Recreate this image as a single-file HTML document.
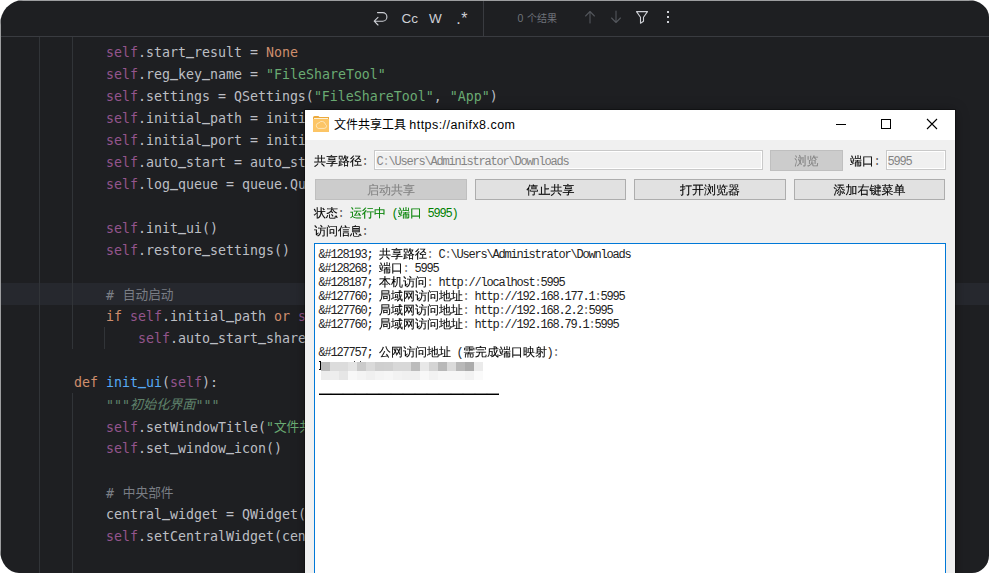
<!DOCTYPE html>
<html lang="zh-CN">
<head>
<meta charset="utf-8">
<title>文件共享工具</title>
<style>
html,body{margin:0;padding:0;background:#fff;}
body{width:989px;height:573px;overflow:hidden;position:relative;font-family:"Liberation Sans","Noto Sans CJK SC",sans-serif;}
#ide{position:absolute;left:0;top:0;width:989px;height:573px;background:#1e1f22;border-radius:23px 21px 17px 19px / 25px 17px 17.5px 23px;overflow:hidden;}
#ide .in{position:absolute;left:0;top:0;width:989px;height:573px;}
.edge{position:absolute;background:#9d9ea0;}
.abs{position:absolute;}
#tb{left:0;top:0;width:989px;height:36px;border-bottom:1px solid #393b40;}
.vg{position:absolute;width:1px;background:#313438;}
#cur{left:0;top:283px;width:989px;height:22px;background:#26282e;}
.cl{position:absolute;left:42px;height:22px;line-height:22px;white-space:pre;font-family:"DejaVu Sans Mono","Liberation Mono","Noto Sans CJK SC",monospace;font-size:13.29px;color:#bcbec4;}
.cl .cj{font-family:"Noto Sans CJK SC",sans-serif;font-size:12.7px;position:relative;top:-1.2px;}
.k{color:#cf8e6d}.s{color:#94558d}.g{color:#6aab73}.f{color:#56a8f5}.c{color:#7a7e85}.d{color:#5f826b;font-style:italic}
/* toolbar */
.ti{position:absolute;color:#ced0d6;font-size:13.5px;line-height:16px;white-space:pre;}
/* dialog */
#win{-webkit-text-stroke:0.12px currentColor;box-shadow:0 0 0 1px rgba(0,0,0,.3),0 1px 12px rgba(0,0,0,.35);position:absolute;left:305px;top:110px;width:650px;height:470px;background:#f0f0f0;box-sizing:border-box;font-size:12px;color:#000;font-family:"WenQuanYi Zen Hei","Noto Sans CJK SC",sans-serif;}
#title{position:absolute;left:0;top:0;width:650px;height:30px;background:#fff;}
#ttxt{-webkit-text-stroke:0;position:absolute;left:29px;top:7px;line-height:16px;font-size:12px;white-space:pre;font-family:"Liberation Sans","Noto Sans CJK SC",sans-serif;}
.m{-webkit-text-stroke:0;font-family:"Liberation Mono",monospace;font-size:12px;letter-spacing:-1.2px;margin-left:-.6px;margin-right:.6px;}
.lb{position:absolute;line-height:14px;height:14px;white-space:pre;font-size:12px;}
.btn{position:absolute;box-sizing:border-box;height:21px;border:1px solid #adadad;background:#e1e1e1;text-align:center;line-height:21px;font-size:12px;white-space:pre;}
.btn.dis{background:#cccccc;border-color:#bfbfbf;color:#838383;}
.inp{position:absolute;box-sizing:border-box;height:20px;border:1px solid #c9c9c9;background:#f0f0f0;box-shadow:inset 0 0 0 1px #fff;color:#848484;line-height:20px;padding-left:2px;white-space:pre;font-size:12px;}
#ta{position:absolute;left:9px;top:133px;width:632px;height:340px;box-sizing:border-box;border:1px solid #0078d7;background:#fff;}
.ll{position:absolute;left:4px;height:14px;line-height:14px;white-space:pre;font-size:12px;}
#mos{position:absolute;left:5.5px;top:118px;width:162px;height:18px;}
#mos i{position:absolute;width:9px;height:9px;display:block;}
#ttxt .u{font-size:12.5px;letter-spacing:0.45px;}
.hr{width:180px;overflow:hidden;background:linear-gradient(#000,#000) no-repeat 0 7px/180px 1px;}
.px{position:absolute;background:#000;}
.us{position:relative;top:-2.5px;font-weight:bold;}
.cl .d .cj{font-size:13.1px;}
.cl .c .cj{margin-left:.8px;}
.co{opacity:.62;}
.ll .m{color:#222;}
</style>
</head>
<body>
<div id="ide"><div class="in">
<div id="tb" class="abs">
<svg class="abs" style="left:0;top:0" width="989" height="36" viewBox="0 0 989 36" fill="none">
 <rect x="483" y="1" width="1" height="35" fill="#393b40"/>
 <path d="M377.5 12.6H382.6A4.3 4.3 0 0 1 382.6 21.2H374.6M378 17.4L374.2 21.2L378 25" stroke="#ced0d6" stroke-width="1.1" stroke-linecap="round" stroke-linejoin="round"/>
 <path d="M590 22.9V11.6M585.6 16L590 11.5L594.4 16" stroke="#52555b" stroke-width="1.1" stroke-linecap="round" stroke-linejoin="round"/>
 <path d="M616 11.1V22.4M611.6 18L616 22.5L620.4 18" stroke="#52555b" stroke-width="1.1" stroke-linecap="round" stroke-linejoin="round"/>
 <path d="M636.5 11.6H647.5L643.5 17.3V21.3L640.5 23.2V17.3Z" stroke="#ced0d6" stroke-width="1.1" stroke-linejoin="round"/>
 <rect x="667" y="11" width="2" height="2" fill="#ced0d6"/><rect x="667" y="16" width="2" height="2" fill="#ced0d6"/><rect x="667" y="21" width="2" height="2" fill="#ced0d6"/>
</svg>
<div class="ti" style="left:401.5px;top:11px">Cc</div>
<div class="ti" style="left:429px;top:11px">W</div>
<div class="ti" style="left:456.3px;top:11.2px;font-size:16px;letter-spacing:.4px">.*</div>
<div class="ti" style="left:517.4px;top:9.5px;font-size:10.5px;color:#6f737a">0 <span style="font-size:10px;margin-left:.8px">个结果</span></div>
</div>
<div id="cur" class="abs"></div>
<div class="vg" style="left:39px;top:37px;height:536px"></div>
<div class="vg" style="left:72px;top:37px;height:312px"></div>
<div class="vg" style="left:104px;top:327px;height:22px"></div>
<div class="vg" style="left:72px;top:393px;height:180px"></div>
<div class="edge" style="left:0;top:0;width:989px;height:1px"></div><div class="edge" style="left:0;top:0;width:1px;height:573px"></div>
<div id="code">
<div class="cl" style="top:42px">        <span class="s">self</span>.start<span class="us">_</span>result = <span class="k">None</span></div>
<div class="cl" style="top:64px">        <span class="s">self</span>.reg<span class="us">_</span>key<span class="us">_</span>name = <span class="g">"FileShareTool"</span></div>
<div class="cl" style="top:86px">        <span class="s">self</span>.settings = QSettings(<span class="g">"FileShareTool"</span>, <span class="g">"App"</span>)</div>
<div class="cl" style="top:108px">        <span class="s">self</span>.initial<span class="us">_</span>path = initial<span class="us">_</span>path</div>
<div class="cl" style="top:130px">        <span class="s">self</span>.initial<span class="us">_</span>port = initial<span class="us">_</span>port</div>
<div class="cl" style="top:152px">        <span class="s">self</span>.auto<span class="us">_</span>start = auto<span class="us">_</span>start</div>
<div class="cl" style="top:174px">        <span class="s">self</span>.log<span class="us">_</span>queue = queue.Queue()</div>
<div class="cl" style="top:218px">        <span class="s">self</span>.init<span class="us">_</span>ui()</div>
<div class="cl" style="top:240px">        <span class="s">self</span>.restore<span class="us">_</span>settings()</div>
<div class="cl" style="top:284px">        <span class="c"># <span class="cj">自动启动</span></span></div>
<div class="cl" style="top:306px">        <span class="k">if</span> <span class="s">self</span>.initial<span class="us">_</span>path <span class="k">or</span> <span class="s">self</span>.initial<span class="us">_</span>port:</div>
<div class="cl" style="top:328px">            <span class="s">self</span>.auto<span class="us">_</span>start<span class="us">_</span>share()</div>
<div class="cl" style="top:372px">    <span class="k">def</span> <span class="f">init<span class="us">_</span>ui</span>(<span class="s">self</span>):</div>
<div class="cl" style="top:394px">        <span class="d">"""<span class="cj">初始化界面</span>"""</span></div>
<div class="cl" style="top:416px">        <span class="s">self</span>.setWindowTitle(<span class="g">"<span class="cj">文件共享工具</span>"</span>)</div>
<div class="cl" style="top:438px">        <span class="s">self</span>.set<span class="us">_</span>window<span class="us">_</span>icon()</div>
<div class="cl" style="top:482px">        <span class="c"># <span class="cj">中央部件</span></span></div>
<div class="cl" style="top:504px">        central<span class="us">_</span>widget = QWidget()</div>
<div class="cl" style="top:526px">        <span class="s">self</span>.setCentralWidget(central<span class="us">_</span>widget)</div>
</div>
<div id="win">
 <div id="title">
  <svg class="abs" style="left:8px;top:6px" width="16" height="16" viewBox="0 0 16 16">
   <path d="M0 1.6Q0 0 1.6 0H5Q6 0 6.4 1H16V4H0Z" fill="#eca93c"/>
   <rect x="1" y="2" width="14" height="1.2" fill="#fdf1d6"/>
   <rect x="0" y="3" width="16" height="13" fill="#fcc566"/>
   <path d="M5.2 12.4H11.2A2.2 2.2 0 0 0 12.4 8.3A3.6 3.6 0 0 0 6 6.8A2.9 2.9 0 0 0 5.2 12.4Z" fill="none" stroke="#fde9c0" stroke-width="0.9"/>
  </svg>
  <div id="ttxt">文件共享工具 <span class="u">https://anifx8.com</span></div>
  <svg class="abs" style="left:520px;top:0" width="130" height="30" viewBox="825 110 130 30" shape-rendering="crispEdges">
   <rect x="836" y="124" width="10" height="1" fill="#000"/>
   <rect x="881.5" y="119.5" width="9" height="9" fill="none" stroke="#000" stroke-width="1"/>
  </svg>
  <svg class="abs" style="left:520px;top:0" width="130" height="30" viewBox="825 110 130 30">
   <path d="M927 119L937 129M937 119L927 129" stroke="#000" stroke-width="1.1"/>
  </svg>
 </div>
 <div class="lb" style="left:9px;top:44px">共享路径<span class="m"><span class="co">:</span></span></div>
 <div class="inp" style="left:69px;top:40px;width:389px"><span class="m">C<span class="co">:</span>\Users\Administrator\Downloads</span></div>
 <div class="btn dis" style="left:465px;top:40px;width:73px">浏览</div>
 <div class="lb" style="left:545px;top:44px">端口<span class="m"><span class="co">:</span></span></div>
 <div class="inp" style="left:581px;top:40px;width:60px;padding-left:1px"><span class="m">5995</span></div>
 <div class="btn dis" style="left:10px;top:69px;width:152px">启动共享</div>
 <div class="btn" style="left:170px;top:69px;width:151px">停止共享</div>
 <div class="btn" style="left:329px;top:69px;width:152px">打开浏览器</div>
 <div class="btn" style="left:489px;top:69px;width:151px">添加右键菜单</div>
 <div class="lb" style="left:9px;top:96px">状态<span class="m"><span class="co">:</span> </span><span style="color:#008000">运行中<span class="m"> (</span>端口<span class="m"> 5995)</span></span></div>
 <div class="lb" style="left:9px;top:114px">访问信息<span class="m"><span class="co">:</span></span></div>
 <div id="ta">
<div class="ll" style="top:3px"><span class="m">&amp;#128193; </span>共享路径<span class="m"><span class="co">:</span> C<span class="co">:</span>\Users\Administrator\Downloads</span></div>
<div class="ll" style="top:17px"><span class="m">&amp;#128268; </span>端口<span class="m"><span class="co">:</span> 5995</span></div>
<div class="ll" style="top:31px"><span class="m">&amp;#128187; </span>本机访问<span class="m"><span class="co">:</span> http<span class="co">:</span>//localhost<span class="co">:</span>5995</span></div>
<div class="ll" style="top:45px"><span class="m">&amp;#127760; </span>局域网访问地址<span class="m"><span class="co">:</span> http<span class="co">:</span>//192.168.177.1<span class="co">:</span>5995</span></div>
<div class="ll" style="top:59px"><span class="m">&amp;#127760; </span>局域网访问地址<span class="m"><span class="co">:</span> http<span class="co">:</span>//192.168.2.2<span class="co">:</span>5995</span></div>
<div class="ll" style="top:73px"><span class="m">&amp;#127760; </span>局域网访问地址<span class="m"><span class="co">:</span> http<span class="co">:</span>//192.168.79.1<span class="co">:</span>5995</span></div>
<div class="ll" style="top:101px"><span class="m">&amp;#127757; </span>公网访问地址<span class="m"> (</span>需完成端口映射<span class="m">)<span class="co">:</span></span></div>
  <div id="mos"><i style="left:0px;top:0;background:#bbbbbb"></i><i style="left:9px;top:0;background:#dcdcdc"></i><i style="left:18px;top:0;background:#dcdcdc"></i><i style="left:27px;top:0;background:#e4e4e4"></i><i style="left:36px;top:0;background:#cbcbcb"></i><i style="left:45px;top:0;background:#dadada"></i><i style="left:54px;top:0;background:#cfcfcf"></i><i style="left:63px;top:0;background:#d0d0d0"></i><i style="left:72px;top:0;background:#d8d8d8"></i><i style="left:81px;top:0;background:#d8d8d8"></i><i style="left:90px;top:0;background:#bcbcbc"></i><i style="left:99px;top:0;background:#e8e8e8"></i><i style="left:108px;top:0;background:#d4d4d4"></i><i style="left:117px;top:0;background:#b8b8b8"></i><i style="left:126px;top:0;background:#dadada"></i><i style="left:135px;top:0;background:#b8b8b8"></i><i style="left:144px;top:0;background:#ababab"></i><i style="left:153px;top:0;background:#ebebeb"></i><i style="left:0px;top:9px;background:#ececec"></i><i style="left:9px;top:9px;background:#eeeeee"></i><i style="left:18px;top:9px;background:#e6e6e6"></i><i style="left:27px;top:9px;background:#f8f8f8"></i><i style="left:36px;top:9px;background:#f4f4f4"></i><i style="left:45px;top:9px;background:#f0f0f0"></i><i style="left:54px;top:9px;background:#f4f4f4"></i><i style="left:63px;top:9px;background:#f6f6f6"></i><i style="left:72px;top:9px;background:#f2f2f2"></i><i style="left:81px;top:9px;background:#f0f0f0"></i><i style="left:90px;top:9px;background:#f0f0f0"></i><i style="left:99px;top:9px;background:#f8f8f8"></i><i style="left:108px;top:9px;background:#f2f2f2"></i><i style="left:117px;top:9px;background:#f6f6f6"></i><i style="left:126px;top:9px;background:#f6f6f6"></i><i style="left:135px;top:9px;background:#f6f6f6"></i><i style="left:144px;top:9px;background:#f2f2f2"></i><i style="left:153px;top:9px;background:#fafafa"></i></div>
  <div class="px" style="left:5px;top:117px;width:1px;height:9px"></div><div class="px" style="left:4px;top:117px;width:1px;height:1px"></div><div class="px" style="left:4px;top:125px;width:1px;height:1px"></div><div class="px" style="left:39px;top:117px;width:1px;height:1px;opacity:.7"></div><div class="px" style="left:45px;top:117px;width:1px;height:1px;opacity:.7"></div>
  <div class="ll hr" style="top:143px">───────────────</div>
 </div>
</div>
</div></div>
</body>
</html>
